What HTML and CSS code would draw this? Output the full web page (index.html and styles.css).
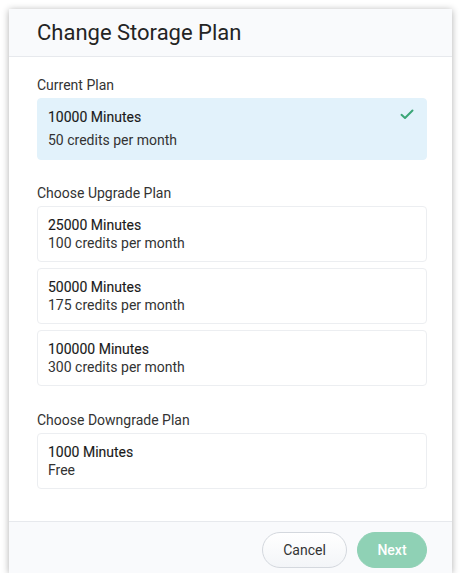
FILE: index.html
```html
<!DOCTYPE html>
<html>
<head>
<meta charset="utf-8">
<link rel="stylesheet" href="styles.css">
</head>
<body>
<div class="modal">
  <div class="modal-header">
    <h1 class="modal-title">Change Storage Plan</h1>
  </div>
  <div class="modal-body">
    <div class="section">
      <div class="section-label">Current Plan</div>
      <div class="plan plan-current">
        <div class="plan-text">
          <div class="plan-name">10000 Minutes</div>
          <div class="plan-price">50 credits per month</div>
        </div>
        <svg class="check" width="14" height="11" viewBox="0 0 14 11"><path d="M1.5 5.8 L5 9 L12.5 1.5" fill="none" stroke="#3ba677" stroke-width="2" stroke-linecap="round" stroke-linejoin="round"/></svg>
      </div>
    </div>
    <div class="section">
      <div class="section-label">Choose Upgrade Plan</div>
      <div class="plan-list">
        <div class="plan">
          <div class="plan-name">25000 Minutes</div>
          <div class="plan-price">100 credits per month</div>
        </div>
        <div class="plan">
          <div class="plan-name">50000 Minutes</div>
          <div class="plan-price">175 credits per month</div>
        </div>
        <div class="plan">
          <div class="plan-name">100000 Minutes</div>
          <div class="plan-price">300 credits per month</div>
        </div>
      </div>
    </div>
    <div class="section section-down">
      <div class="section-label">Choose Downgrade Plan</div>
      <div class="plan-list">
        <div class="plan">
          <div class="plan-name">1000 Minutes</div>
          <div class="plan-price">Free</div>
        </div>
      </div>
    </div>
  </div>
  <div class="modal-footer">
    <button class="btn btn-cancel">Cancel</button>
    <button class="btn btn-next">Next</button>
  </div>
</div>
</body>
</html>
```
FILE: styles.css
```css
html, body {
  margin: 0;
  padding: 0;
  background: #ffffff;
}
body {
  font-family: Roboto, "Liberation Sans", sans-serif;
  color: #2b2b2b;
  padding: 9px 9px 0 9px;
}
.modal {
  width: 443px;
  height: 564px;
  background: #ffffff;
  box-shadow: 0 1px 7px rgba(0, 0, 0, 0.32);
  display: flex;
  flex-direction: column;
}
.modal-header {
  height: 47px;
  background: #f9fafc;
  border-bottom: 1px solid #e7e9ed;
  display: flex;
  align-items: center;
  padding: 0 25px 0 28px;
}
.modal-title {
  margin: 0;
  font-size: 22px;
  font-weight: 400;
  color: #242424;
  letter-spacing: 0;
}
.modal-body {
  flex: 1;
  padding: 18px 25px 0 28px;
  display: flex;
  flex-direction: column;
  gap: 23px;
}
.section-down {
  margin-top: 1px;
}
.section-label {
  font-size: 14px;
  line-height: 20px;
  color: #333333;
  margin-bottom: 3px;
}
.plan-list {
  display: flex;
  flex-direction: column;
  gap: 6px;
}
.plan {
  border: 1px solid #eceef1;
  border-radius: 4px;
  padding: 9px 10px;
  font-size: 14px;
  line-height: 18px;
}
.plan-current {
  background: #e2f2fb;
  border-color: #e2f2fb;
  display: flex;
  justify-content: space-between;
  align-items: flex-start;
  padding: 9px 10px 10px 10px;
}
.plan-current .plan-price {
  margin-top: 5px;
}
.check {
  margin-top: 1px;
  margin-right: 2px;
}
.plan-name {
  font-weight: 400;
  color: #1a1a1a;
  -webkit-text-stroke: 0.12px #1a1a1a;
}
.plan-price {
  color: #333333;
}
.modal-footer {
  height: 52px;
  background: #f9fafc;
  border-top: 1px solid #e7e9ed;
  display: flex;
  justify-content: flex-end;
  align-items: flex-start;
  gap: 10px;
  padding: 10px 25px 0 28px;
  box-sizing: border-box;
}
.btn {
  height: 36px;
  border-radius: 18px;
  font-family: Roboto, "Liberation Sans", sans-serif;
  font-size: 14px;
  padding: 0;
  cursor: pointer;
}
.btn-cancel {
  width: 85px;
  background: linear-gradient(#ffffff, #f3f5f8);
  border: 1px solid #d4d8de;
  color: #333333;
}
.btn-next {
  width: 70px;
  background: #8fd1b5;
  border: 1px solid #8fd1b5;
  color: #ffffff;
  font-weight: 500;
}
```
